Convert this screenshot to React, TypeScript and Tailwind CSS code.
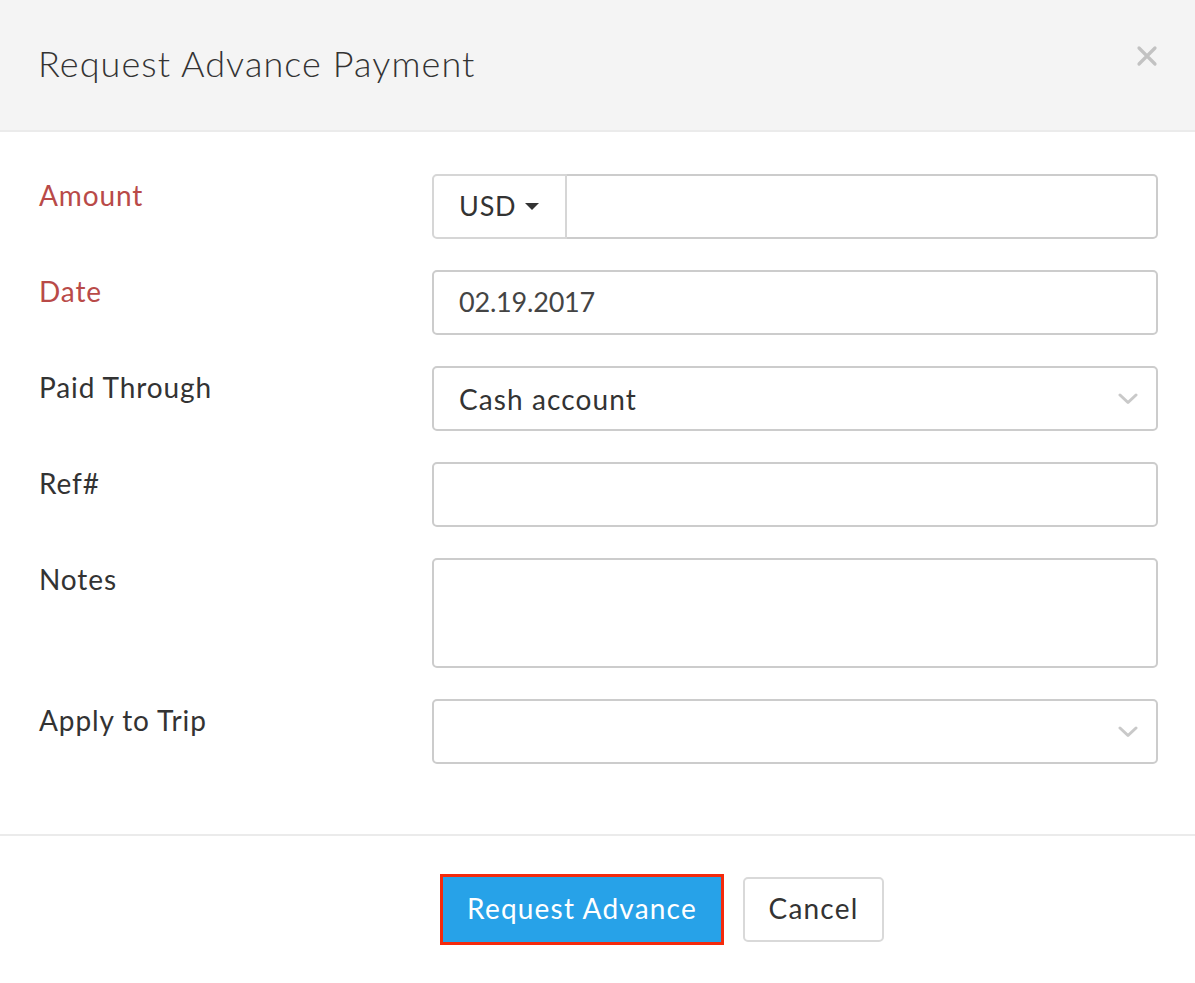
import React from 'react';

const font = { fontFamily: 'Lato, "Open Sans", sans-serif' };

const Chevron: React.FC = () => (
  <svg width="20" height="12" viewBox="0 0 20 12" className="shrink-0">
    <path d="M2 2 L10 9.5 L18 2" fill="none" stroke="#c9c9c9" strokeWidth="3" strokeLinecap="round" strokeLinejoin="round" />
  </svg>
);

const Row: React.FC<{ label: string; required?: boolean; children: React.ReactNode }> = ({ label, required, children }) => (
  <div className="flex">
    <div className={`w-[393px] shrink-0 text-[28px] tracking-[0.9px] ${required ? 'text-[#b94a48]' : 'text-[#333333]'}`}>{label}</div>
    <div className="flex-1">{children}</div>
  </div>
);

const App: React.FC = () => {
  return (
    <div className="min-h-screen w-full bg-white" style={font}>
      {/* header */}
      <div className="flex h-[132px] items-center justify-between border-b-2 border-[#ebebeb] bg-[#f4f4f4] pl-[38px] pr-[36px]">
        <h1 className="mb-[4px] text-[36px] font-light tracking-[1.1px] text-[#333333]">Request Advance Payment</h1>
        <button className="mb-[18px] text-[#c2c2c2]">
          <svg width="24" height="24" viewBox="0 0 24 24">
            <path d="M4 4 L20 20 M20 4 L4 20" stroke="#c2c2c2" strokeWidth="3.2" strokeLinecap="round" />
          </svg>
        </button>
      </div>

      {/* body */}
      <div className="flex flex-col gap-[31px] pb-[70px] pl-[39px] pr-[37px] pt-[42px]">
        <Row label="Amount" required>
          <div className="flex h-[65px]">
            <div className="flex w-[135px] items-center gap-[9px] rounded-l-[5px] border-2 border-[#d6d6d6] bg-white pl-[25px] text-[27px] tracking-[0.8px] text-[#333333]">
              <span>USD</span>
              <svg width="14" height="8" viewBox="0 0 14 8">
                <path d="M0 0 L14 0 L7 7 Z" fill="#333333" />
              </svg>
            </div>
            <div className="flex-1 rounded-r-[5px] border-2 border-l-0 border-[#cccccc]" />
          </div>
        </Row>
        <Row label="Date" required>
          <div className="flex h-[65px] items-center rounded-[5px] border-2 border-[#cccccc] pl-[25px] text-[27px] tracking-[-0.2px] text-[#444444]">02.19.2017</div>
        </Row>
        <Row label="Paid Through">
          <div className="flex h-[65px] items-center justify-between rounded-[5px] border-2 border-[#cccccc] pl-[25px] pr-[18px] text-[28px] tracking-[1.1px] text-[#333333]">
            <span>Cash account</span>
            <Chevron />
          </div>
        </Row>
        <Row label="Ref#">
          <div className="h-[65px] rounded-[5px] border-2 border-[#cccccc]" />
        </Row>
        <Row label="Notes">
          <div className="h-[110px] rounded-[5px] border-2 border-[#cccccc]" />
        </Row>
        <Row label="Apply to Trip">
          <div className="flex h-[65px] items-center justify-end rounded-[5px] border-2 border-[#cccccc] pr-[18px]">
            <Chevron />
          </div>
        </Row>
      </div>

      {/* footer */}
      <div className="flex items-center gap-[19px] border-t-2 border-[#ebebeb] pl-[440px] pt-[38px]">
        <div className="border-[3px] border-[#f52a0c]">
          <button className="h-[65px] w-[278px] bg-[#27a2e8] pb-[4px] text-[28px] tracking-[1.2px] text-white">Request Advance</button>
        </div>
        <button className="h-[65px] w-[141px] rounded-[5px] border-2 border-[#d9d9d9] bg-white pb-[4px] text-[28px] tracking-[1.2px] text-[#333333]">Cancel</button>
      </div>
    </div>
  );
};

export default App;
